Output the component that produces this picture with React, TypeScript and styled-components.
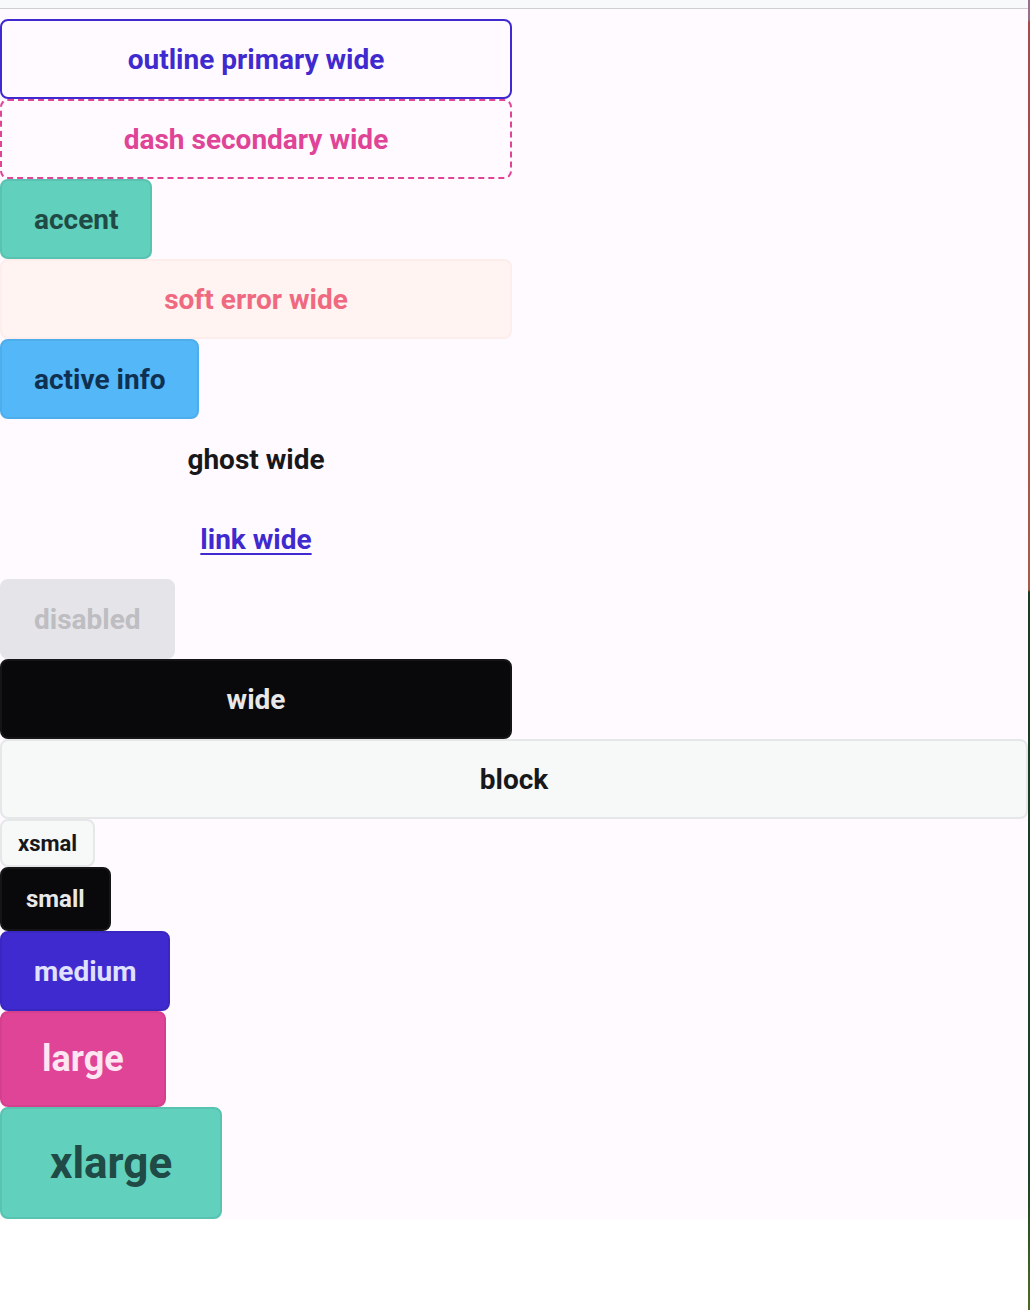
import React from 'react';
import styled, { createGlobalStyle, css } from 'styled-components';

type Tone = 'base' | 'neutral' | 'primary' | 'secondary' | 'accent' | 'info' | 'error';
type Size = 'xs' | 'sm' | 'md' | 'lg' | 'xl';
type Look = 'solid' | 'outline' | 'dash' | 'soft' | 'ghost' | 'link' | 'disabled';

const tones: Record<Tone, { bg: string; fg: string; border: string }> = {
  base: { bg: '#f7f8f8', fg: '#18181b', border: '#e6e7e8' },
  neutral: { bg: '#09090b', fg: '#e8e8ea', border: '#151517' },
  primary: { bg: '#3f2acf', fg: '#e0e1ff', border: '#3a27c2' },
  secondary: { bg: '#e04496', fg: '#fce6f2', border: '#d4408d' },
  accent: { bg: '#61d0bc', fg: '#1f4a45', border: '#58c3b0' },
  info: { bg: '#53b7f8', fg: '#0f3050', border: '#4eaeec' },
  error: { bg: '#fff4f2', fg: '#ef6a80', border: '#fdeeec' },
};

const sizes: Record<Size, { h: number; font: number; pad: number }> = {
  xs: { h: 48, font: 22, pad: 16 },
  sm: { h: 64, font: 24, pad: 24 },
  md: { h: 80, font: 28, pad: 32 },
  lg: { h: 96, font: 36, pad: 40 },
  xl: { h: 112, font: 44, pad: 48 },
};

const GlobalStyle = createGlobalStyle`
  html, body {
    margin: 0;
    padding: 0;
    background: #ffffff;
  }
  body {
    font-family: Roboto, "Liberation Sans", sans-serif;
  }
`;

const Page = styled.div`
  display: flex;
  width: 1030px;
  min-height: 1310px;
`;

const Main = styled.div`
  flex: 1;
  display: flex;
  flex-direction: column;
`;

const TopBar = styled.div`
  height: 8px;
  background: #f8f9fa;
  border-bottom: 1px solid #cfcfcf;
`;

const Stack = styled.div`
  display: flex;
  flex-direction: column;
  align-items: flex-start;
  padding-top: 10px;
  background: #fffaff;
`;

const EdgeStrip = styled.div`
  width: 2px;
  background: linear-gradient(
    to bottom,
    #9a7088 0px,
    #9a7088 20px,
    #a84a4c 22px,
    #a85a48 590px,
    #1c3a22 592px,
    #1f4224 1180px,
    #4a6a24 1300px
  );
`;

const Btn = styled.button<{ $tone: Tone; $size: Size; $look: Look; $wide?: boolean; $block?: boolean }>`
  display: inline-flex;
  align-items: center;
  justify-content: center;
  box-sizing: border-box;
  height: ${(p) => sizes[p.$size].h}px;
  padding: 0 ${(p) => sizes[p.$size].pad}px;
  font-family: Roboto, "Liberation Sans", sans-serif;
  font-size: ${(p) => sizes[p.$size].font}px;
  font-weight: 700;
  border-radius: 8px;
  border: 2px solid ${(p) => tones[p.$tone].border};
  background: ${(p) => tones[p.$tone].bg};
  color: ${(p) => tones[p.$tone].fg};
  cursor: pointer;
  white-space: nowrap;
  ${(p) => p.$wide && css`width: 512px;`}
  ${(p) => p.$block && css`width: 100%;`}

  ${(p) =>
    p.$look === 'outline' &&
    css`
      background: transparent;
      border-color: ${tones[p.$tone].bg};
      color: ${tones[p.$tone].bg};
    `}
  ${(p) =>
    p.$look === 'dash' &&
    css`
      background: transparent;
      border: 2px dashed ${tones[p.$tone].bg};
      color: ${tones[p.$tone].bg};
    `}
  ${(p) =>
    p.$look === 'ghost' &&
    css`
      background: transparent;
      border-color: transparent;
      color: #18181b;
    `}
  ${(p) =>
    p.$look === 'link' &&
    css`
      background: transparent;
      border-color: transparent;
      color: #3f2acf;
      text-decoration: underline;
      text-underline-offset: 4px;
      text-decoration-thickness: 2px;
    `}
  ${(p) =>
    p.$look === 'disabled' &&
    css`
      background: #e5e4e8;
      border-color: #e5e4e8;
      color: #bebdc2;
      cursor: not-allowed;
    `}
`;

export default function App() {
  return (
    <Page>
      <GlobalStyle />
      <Main>
        <TopBar />
        <Stack>
          <Btn $tone="primary" $size="md" $look="outline" $wide>outline primary wide</Btn>
          <Btn $tone="secondary" $size="md" $look="dash" $wide>dash secondary wide</Btn>
          <Btn $tone="accent" $size="md" $look="solid">accent</Btn>
          <Btn $tone="error" $size="md" $look="soft" $wide>soft error wide</Btn>
          <Btn $tone="info" $size="md" $look="solid">active info</Btn>
          <Btn $tone="base" $size="md" $look="ghost" $wide>ghost wide</Btn>
          <Btn $tone="primary" $size="md" $look="link" $wide>link wide</Btn>
          <Btn $tone="base" $size="md" $look="disabled" disabled>disabled</Btn>
          <Btn $tone="neutral" $size="md" $look="solid" $wide>wide</Btn>
          <Btn $tone="base" $size="md" $look="solid" $block>block</Btn>
          <Btn $tone="base" $size="xs" $look="solid">xsmal</Btn>
          <Btn $tone="neutral" $size="sm" $look="solid">small</Btn>
          <Btn $tone="primary" $size="md" $look="solid">medium</Btn>
          <Btn $tone="secondary" $size="lg" $look="solid">large</Btn>
          <Btn $tone="accent" $size="xl" $look="solid">xlarge</Btn>
        </Stack>
      </Main>
      <EdgeStrip />
    </Page>
  );
}
